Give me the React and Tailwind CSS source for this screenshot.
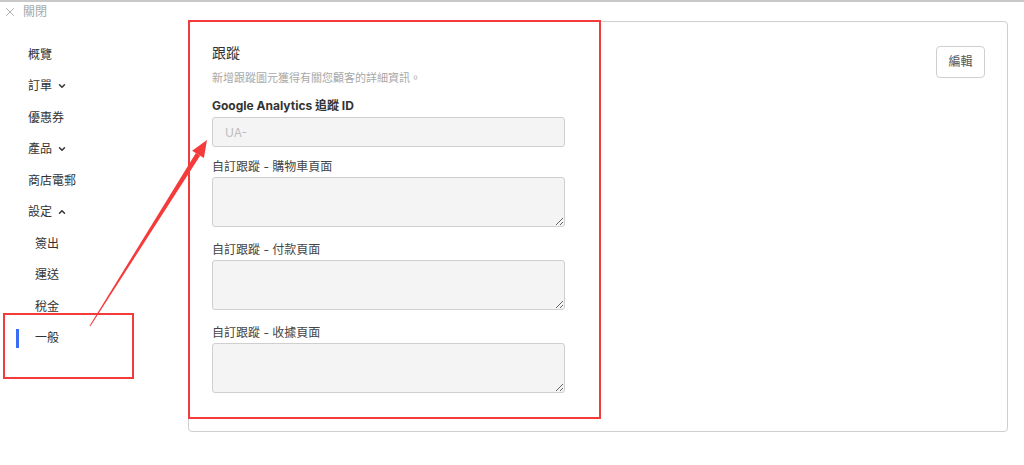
import React from 'react';
import { X, ChevronDown, ChevronUp } from 'lucide-react';

// Settings > 一般 : tracking card, with the red annotation marks on top

const navItems = [
  { label: '概覽' },
  { label: '訂單', chevron: 'down' },
  { label: '優惠券' },
  { label: '產品', chevron: 'down' },
  { label: '商店電郵' },
  { label: '設定', chevron: 'up' },
  { label: '簽出', sub: true },
  { label: '運送', sub: true },
  { label: '稅金', sub: true },
  { label: '一般', sub: true, active: true },
];

const fields = ['自訂跟蹤 - 購物車頁面', '自訂跟蹤 - 付款頁面', '自訂跟蹤 - 收據頁面'];

export default function App() {
  return (
    <div className="relative w-[1024px] h-[465px] overflow-hidden bg-white border-t-2 border-[#c9c9c9] font-['Inter','Noto_Sans_CJK_TC',sans-serif] text-[#333]">
      {/* Close bar */}
      <div className="h-[19px] flex items-center gap-[6px] pl-[3px] text-[#a8a8a8]">
        <X size={14} strokeWidth={1.6} />
        <span className="text-[12px] leading-none">關閉</span>
      </div>

      <div className="flex">
        {/* Sidebar */}
        <nav className="w-[188px] shrink-0 pt-[18px]">
          {navItems.map((item) => (
            <div
              key={item.label}
              className={`relative h-[31.5px] flex items-center gap-[5px] text-[12px] ${item.sub ? 'pl-[35px]' : 'pl-[28px]'}`}
            >
              {item.active && <div className="absolute left-[16px] top-[6px] w-[3px] h-[19px] bg-[#3b6cf6]" />}
              <span>{item.label}</span>
              {item.chevron === 'down' && <ChevronDown size={10} strokeWidth={3.5} />}
              {item.chevron === 'up' && <ChevronUp size={10} strokeWidth={3.5} />}
            </div>
          ))}
        </nav>

        {/* Card */}
        <div className="w-[820px] h-[411px] border border-[#cfcfcf] rounded-[4px] flex justify-between pl-[23px] pr-[22px] pt-[22px]">
          <div className="w-[353px]">
            <h2 className="text-[14px] leading-[18px] text-[#333]">跟蹤</h2>
            <p className="mt-[9px] text-[11px] leading-[14px] text-[#a8a8a8]">新增跟蹤圖元獲得有關您顧客的詳細資訊。</p>

            <label className="block mt-[14px] text-[12px] leading-[14px] font-bold text-[#333]">Google Analytics 追蹤 ID</label>
            <input
              className="block mt-[4px] w-[353px] h-[30px] rounded-[3px] border border-[#cfcfcf] bg-[#f4f4f5] px-[12px] text-[12px] placeholder:text-[#bdbdbd] outline-none"
              placeholder="UA-"
              disabled
            />

            {fields.map((f, i) => (
              <div key={f}>
                <label className={`block ${i === 0 ? 'mt-[13px]' : 'mt-[16px]'} text-[12px] leading-[14px] text-[#444]`}>{f}</label>
                <textarea
                  className="block mt-[3px] w-[353px] h-[50px] rounded-[3px] border border-[#cfcfcf] bg-[#f4f4f5] outline-none resize-y"
                  disabled
                />
              </div>
            ))}
          </div>

          <button className="self-start mt-[2px] w-[49px] h-[32px] rounded-[4px] border border-[#cfcfcf] bg-white text-[12px] text-[#555]">
            編輯
          </button>
        </div>
      </div>

      {/* Annotation overlays */}
      <div className="absolute left-[188px] top-[18px] w-[413px] h-[399px] border-2 border-[#f43b3b] pointer-events-none" />
      <div className="absolute left-[3px] top-[311px] w-[131px] h-[66px] border-2 border-[#f43b3b] pointer-events-none" />
      <svg className="absolute left-0 top-0 pointer-events-none" width="1024" height="465">
        <polygon points="90.4,324.3 89.6,323.7 195.9,151.1 200.1,153.7" fill="#f43b3b" />
        <polygon points="207,138 192.1,148.7 203.9,156.1" fill="#f43b3b" />
      </svg>
    </div>
  );
}
